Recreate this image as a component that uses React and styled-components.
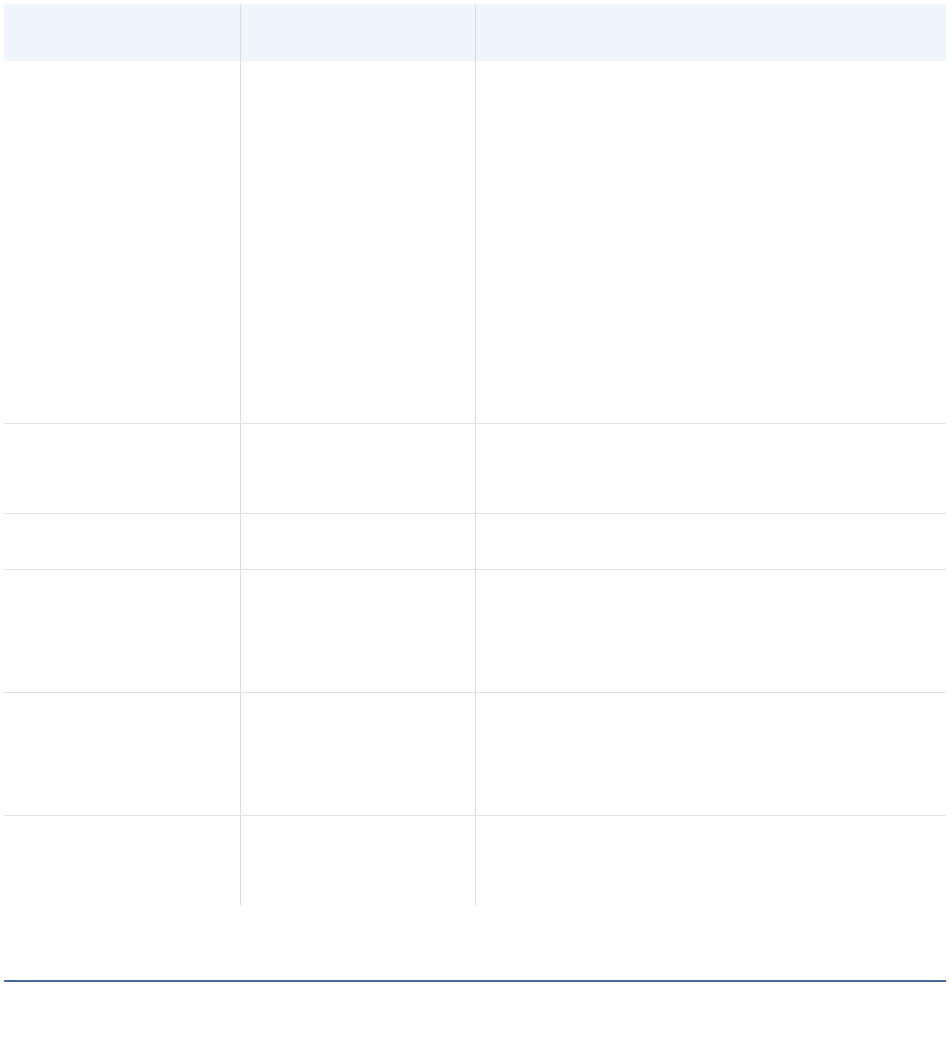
import React from "react";
import styled, { createGlobalStyle } from "styled-components";

const rows = [362, 90, 56, 123, 123, 90];

const App = () => {
  return (
    <Page>
      <GlobalStyle />
      <Table>
        <Row $head $height={57}>
          <Cell />
          <Cell />
          <Cell />
        </Row>
        {rows.map((h, i) => (
          <Row key={i} $height={h} $lined={i > 0}>
            <Cell />
            <Cell />
            <Cell />
          </Row>
        ))}
      </Table>
      <Rule />
    </Page>
  );
};

const GlobalStyle = createGlobalStyle`
  body {
    margin: 0;
    background: #fff;
    font-family: "Open Sans", "Liberation Sans", sans-serif;
  }
`;

const Page = styled.div`
  padding: 4px;
  width: 942px;
`;

const Table = styled.div`
  display: flex;
  flex-direction: column;
`;

const Row = styled.div`
  display: grid;
  grid-template-columns: 236px 235px 1fr;
  box-sizing: border-box;
  height: ${(p) => p.$height}px;
  background: ${(p) => (p.$head ? "#f0f6fe" : "#fff")};
  border-top: ${(p) => (p.$lined ? "1px solid #e2e2e2" : "none")};
`;

const Cell = styled.div`
  & + & {
    border-left: 1px solid #dedcda;
  }
`;

const Rule = styled.div`
  margin-top: 75px;
  height: 2px;
  background: #4469a6;
`;

export default App;
